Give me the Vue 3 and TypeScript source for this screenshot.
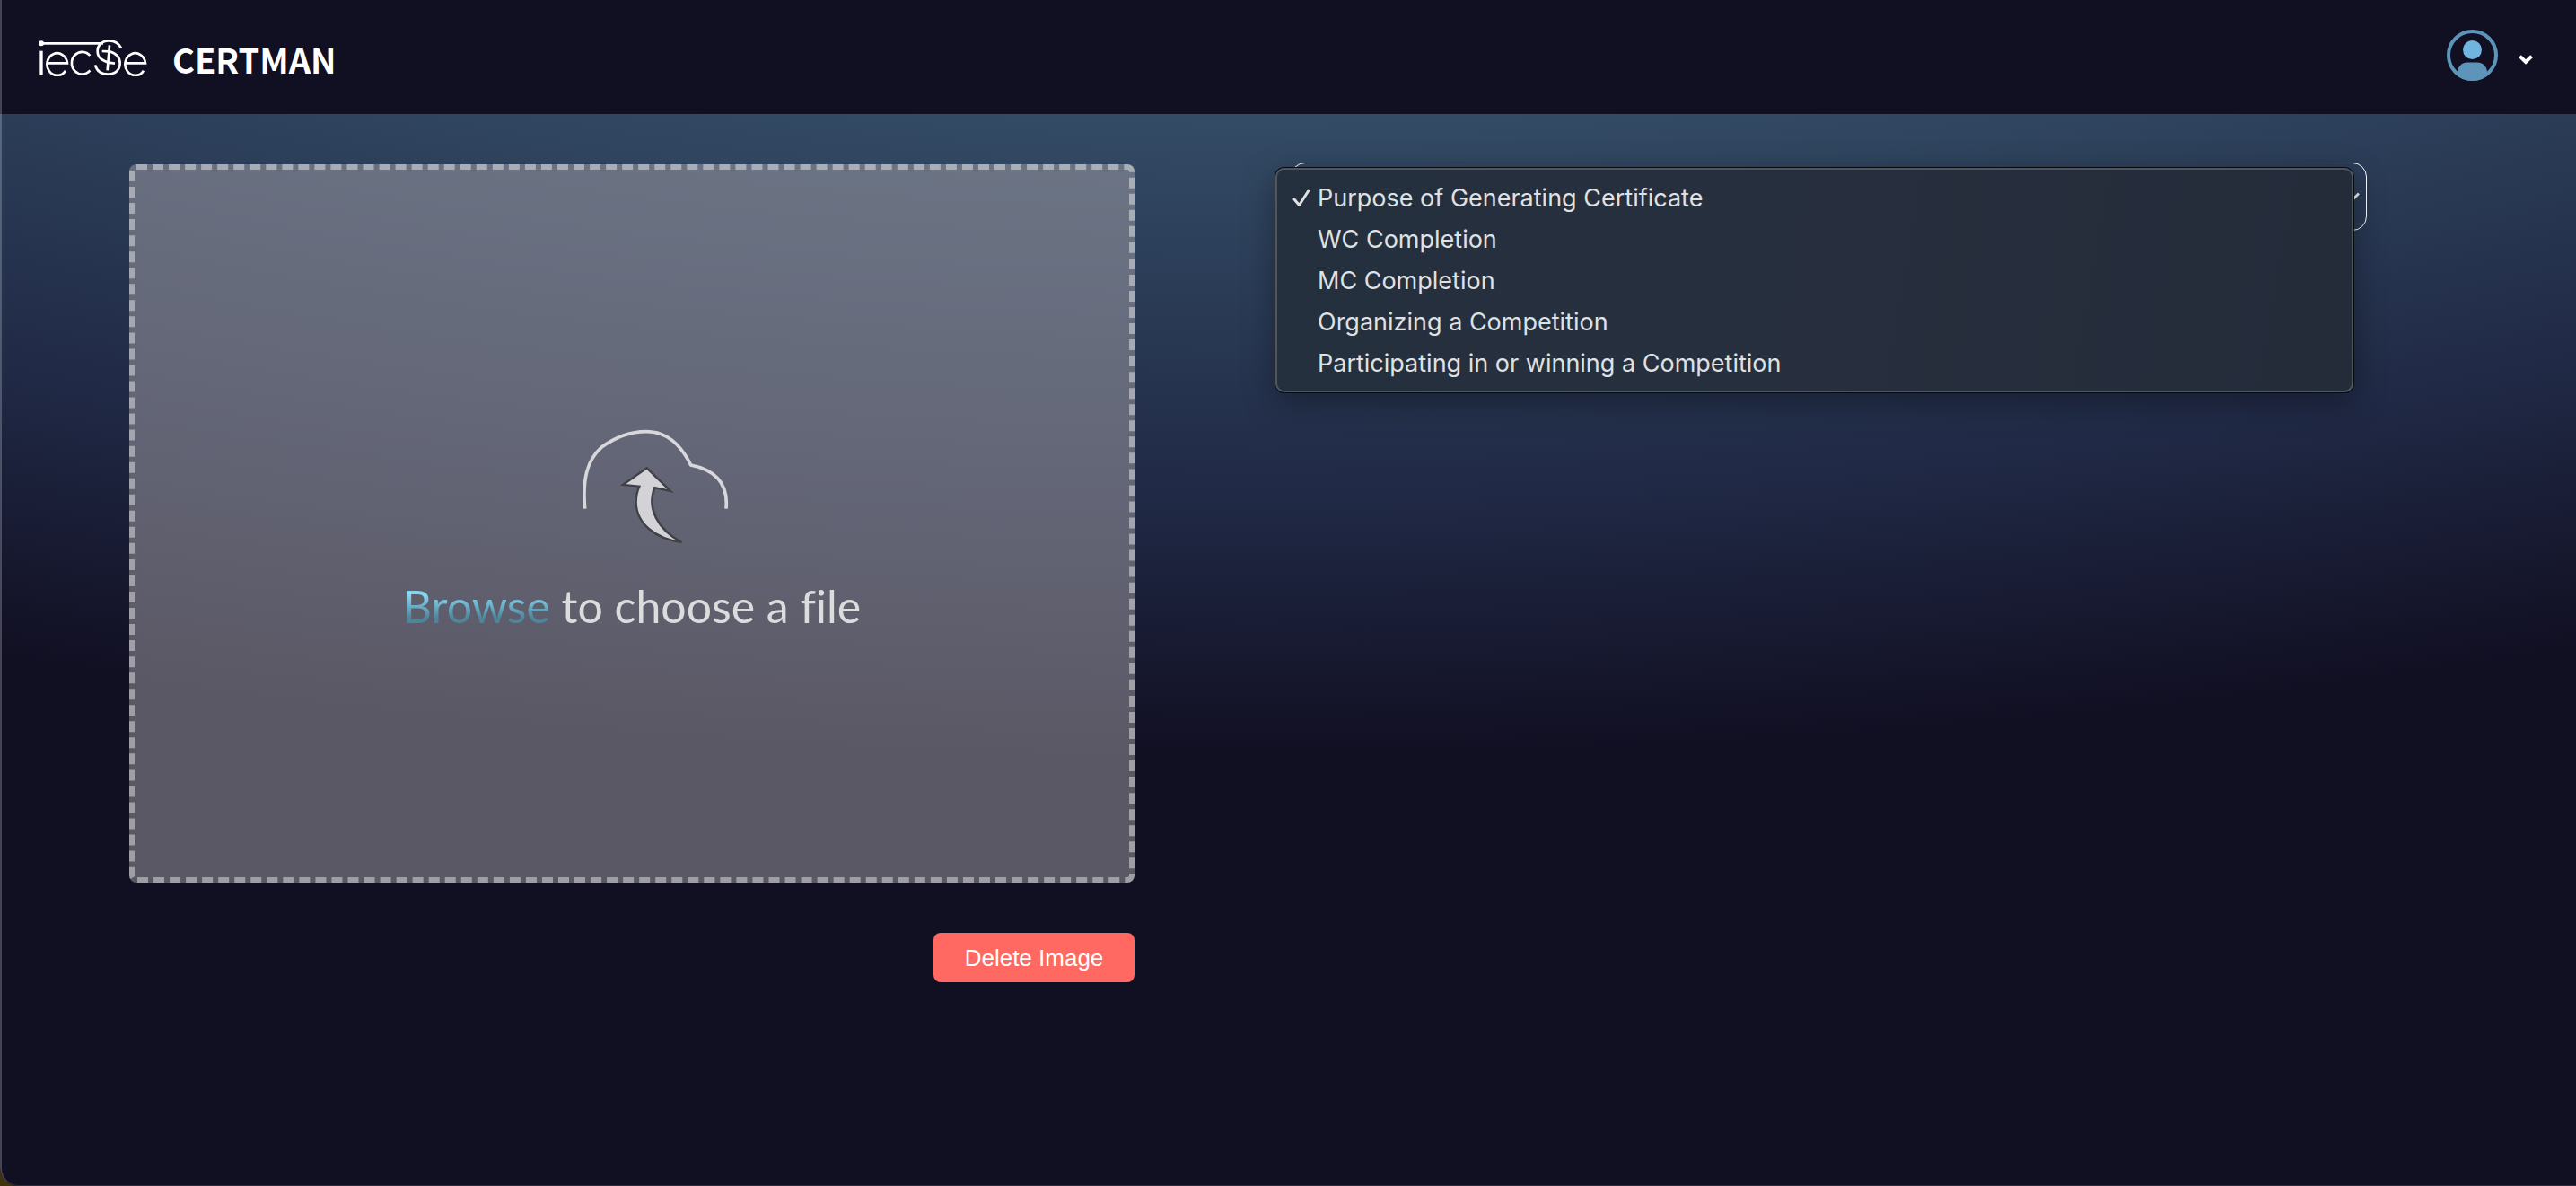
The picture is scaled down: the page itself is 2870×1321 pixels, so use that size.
<script setup lang="ts">
import { ref } from 'vue'

const purposes: string[] = [
  'Purpose of Generating Certificate',
  'WC Completion',
  'MC Completion',
  'Organizing a Competition',
  'Participating in or winning a Competition',
]

const selected = ref<string>(purposes[0])
</script>

<template>
  <div class="page">
    <header class="header">
      <a class="brand" href="#">
        <svg class="logo" viewBox="126 129 366 126" fill="none" stroke="#fff" stroke-width="8" aria-hidden="true">
          <circle cx="138" cy="145" r="9" fill="#fff" stroke="none" />
          <path d="M138 145H345" />
          <path d="M138 170V251" stroke-width="10" />
          <path d="M156 211H225A34 37 0 1 0 219 236" />
          <path d="M301 186A35 37 0 1 0 301 235" />
          <path d="M405 161C396 142 380 136 364 136C340 136 326 152 326 170C326 193 340 201 362 209L384 212" />
          <path d="M318 217C324 238 341 248 361 248C386 248 401 233 401 211C401 190 386 178 366 172L341 171" />
          <path d="M366 151L359 235" />
          <path d="M418 211H486A34 37 0 1 0 480 236" />
        </svg>
        <span class="brand-name">CERTMAN</span>
      </a>
      <button class="account" type="button" aria-label="Account menu">
        <svg class="avatar" viewBox="0 0 57 57" aria-hidden="true">
          <defs>
            <clipPath id="avatar-clip"><circle cx="28.5" cy="28.5" r="28.5" /></clipPath>
          </defs>
          <circle cx="28.5" cy="28.5" r="26.5" fill="none" stroke="#5d94ba" stroke-width="4" />
          <rect x="12" y="36.5" width="33" height="30" rx="11" fill="#5d94ba" clip-path="url(#avatar-clip)" />
          <circle cx="28.5" cy="22.5" r="10.5" fill="#70b5e0" />
        </svg>
        <svg class="chevron" viewBox="0 0 16 11" fill="none" stroke="#fff" stroke-width="4" aria-hidden="true">
          <path d="M1.4 1.6L8 8L14.6 1.6" />
        </svg>
      </button>
    </header>

    <main class="content">
      <section class="upload">
        <label class="dropzone">
          <input class="file-input" type="file" accept="image/*" />
          <svg class="cloud" viewBox="0 0 660 510" fill="none" aria-hidden="true">
            <path
              d="M95 320C87 225 100 160 150 115C195 82 250 62 300 62C370 62 415 105 449 174C530 190 575 235 567 320"
              stroke="#d8d8dc" stroke-width="11"
            />
            <path
              d="M302 184L381 261L328 249C300 320 340 390 418 432C330 420 268 370 266 300C266 275 270 260 277 245L222 240Z"
              fill="#d2d2d7" stroke="#404045" stroke-width="7"
            />
          </svg>
          <span class="prompt"><span class="browse">Browse</span> to choose a file</span>
        </label>
        <button class="delete" type="button">Delete Image</button>
      </section>

      <section class="options">
        <div class="field">
          <select v-model="selected" class="select" aria-label="Purpose">
            <option v-for="purpose in purposes" :key="purpose" :value="purpose">{{ purpose }}</option>
          </select>
          <svg class="select-arrow" viewBox="0 0 16 11" fill="none" stroke="#e8e8e8" stroke-width="3" aria-hidden="true">
            <path d="M1 1.5L8 8.5L15 1.5" />
          </svg>
          <ul class="menu" role="listbox">
            <li
              v-for="purpose in purposes"
              :key="purpose"
              class="menu-item"
              role="option"
              :aria-selected="purpose === selected"
              @click="selected = purpose"
            >
              <span class="tick">
                <svg v-if="purpose === selected" viewBox="0 0 20 20" fill="none" stroke="#dfe1e3" stroke-width="3" stroke-linecap="round" stroke-linejoin="round" aria-hidden="true">
                  <path d="M2 11L7.5 17.5L17.5 2" />
                </svg>
              </span>
              {{ purpose }}
            </li>
          </ul>
        </div>
      </section>
    </main>
  </div>
</template>

<style>
body {
  margin: 0;
  background: #40340f;
}
</style>

<style scoped>
.page {
  position: relative;
  box-sizing: border-box;
  min-height: 100vh;
  overflow: hidden;
  border-bottom-left-radius: 20px;
  background: radial-gradient(ellipse 3714px 1445px at 49% -600px, #344c66 50%, #202945 80%, #110f22 100%) #110f22;
}

.page::after {
  content: '';
  position: absolute;
  inset: 0;
  border-left: 2px solid rgba(255, 255, 255, 0.22);
  border-bottom: 1px solid rgba(255, 255, 255, 0.12);
  border-bottom-left-radius: 20px;
  pointer-events: none;
}

.header {
  display: flex;
  align-items: center;
  justify-content: space-between;
  height: 127px;
  padding: 0 48px 0 42px;
  background: #110f22;
}

.brand {
  display: flex;
  align-items: center;
  gap: 28px;
  color: #fff;
  text-decoration: none;
}

.logo {
  width: 122px;
  height: 42px;
}

.brand-name {
  padding-top: 4px;
  font-family: 'Noto Sans CJK SC', 'Noto Sans', sans-serif;
  font-size: 38px;
  font-weight: 700;
  line-height: 48px;
}

.account {
  display: flex;
  align-items: center;
  gap: 23px;
  padding: 0;
  border: 0;
  background: none;
}

.avatar {
  width: 57px;
  height: 57px;
  margin-bottom: 4px;
}

.chevron {
  width: 16px;
  height: 11px;
  margin-top: 6px;
}

.content {
  display: grid;
  grid-template-columns: 1120fr 1199fr;
  gap: 174px;
  align-items: start;
  padding: 54px 233px 54px 144px;
}

.upload {
  display: flex;
  flex-direction: column;
  align-items: flex-end;
  gap: 56px;
  padding-top: 2px;
}

.dropzone {
  position: relative;
  display: flex;
  flex-direction: column;
  align-items: center;
  justify-content: center;
  box-sizing: border-box;
  width: 100%;
  height: 800px;
  padding-top: 14px;
  border: 6px dashed rgba(255, 255, 255, 0.42);
  border-radius: 8px;
  background: rgba(165, 162, 168, 0.5);
}

.file-input {
  position: absolute;
  inset: 0;
  opacity: 0;
}

.cloud {
  width: 220px;
  height: 170px;
  margin-left: 52px;
}

.prompt {
  font-family: Lato, sans-serif;
  font-size: 50px;
  font-weight: 400;
  font-variant-ligatures: none;
  line-height: 90px;
  color: #dcdcde;
}

.browse {
  background: linear-gradient(#85d6ee 30%, #4f859c 72%);
  background-clip: text;
  color: transparent;
}

.delete {
  width: 224px;
  height: 55px;
  padding: 0;
  border: 0;
  border-radius: 8px;
  background: #ff6961;
  color: #fff;
  font-family: 'Liberation Sans', Arial, sans-serif;
  font-size: 26px;
  line-height: 32px;
}

.field {
  position: relative;
}

.select {
  display: block;
  box-sizing: border-box;
  width: 100%;
  height: 76px;
  padding: 0 32px;
  border: 1px solid #fff;
  border-radius: 16px;
  appearance: none;
  background: transparent;
  color: #fff;
  font-family: Inter, sans-serif;
  font-size: 26px;
}

.select-arrow {
  position: absolute;
  top: 33px;
  right: 8px;
  width: 16px;
  height: 11px;
}

.menu {
  position: absolute;
  top: 6px;
  left: -17px;
  right: 15px;
  margin: 0;
  padding: 9px 0 7px;
  border: 2px solid #4c5763;
  border-radius: 10px;
  background: linear-gradient(100deg, #24303e, #272f3e 50%, #242b39);
  box-shadow: 0 0 0 1px #07090e, 0 10px 36px rgba(0, 0, 0, 0.35);
  list-style: none;
}

.menu-item {
  display: flex;
  align-items: center;
  height: 46px;
  padding-left: 17px;
  color: #dfe1e3;
  font-family: Inter, sans-serif;
  font-size: 27px;
  line-height: 46px;
}

.tick {
  display: flex;
  width: 28px;
}

.tick svg {
  width: 20px;
  height: 20px;
}
</style>
